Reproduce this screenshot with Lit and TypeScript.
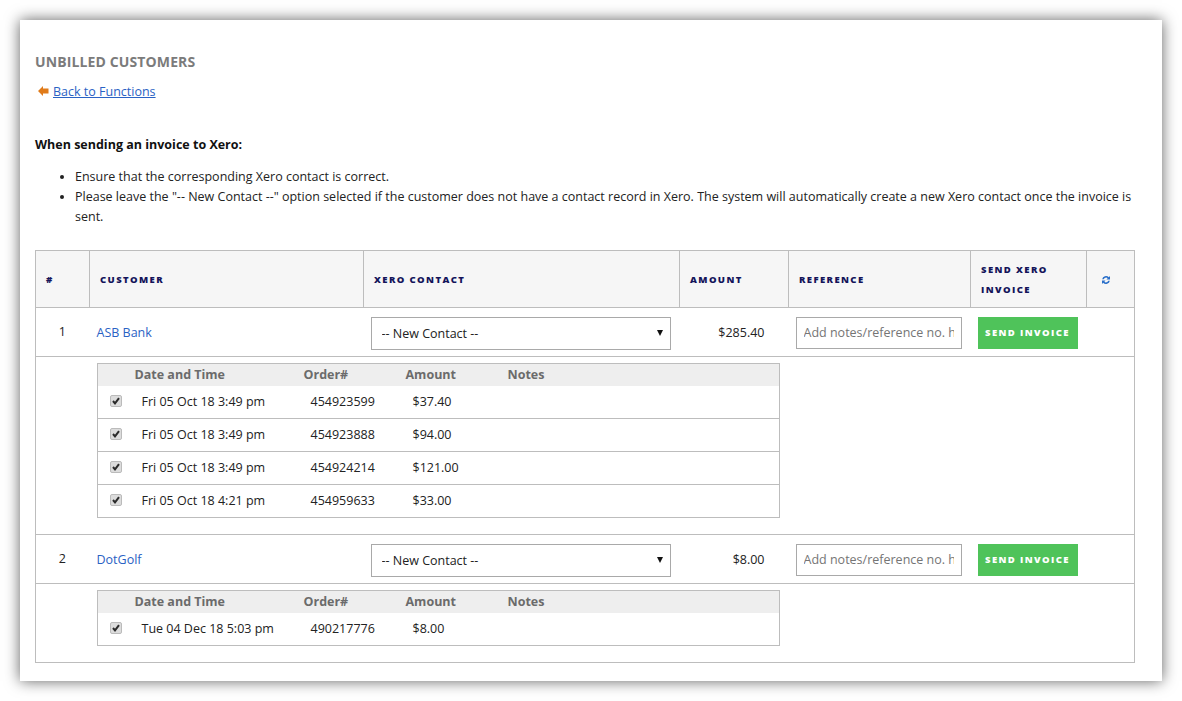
import { LitElement, html, css, svg } from "lit";
import { customElement } from "lit/decorators.js";

interface Order { date: string; no: string; amount: string; }
interface Customer { n: number; name: string; amount: string; orders: Order[]; }

const customers: Customer[] = [
  { n: 1, name: "ASB Bank", amount: "$285.40", orders: [
    { date: "Fri 05 Oct 18 3:49 pm", no: "454923599", amount: "$37.40" },
    { date: "Fri 05 Oct 18 3:49 pm", no: "454923888", amount: "$94.00" },
    { date: "Fri 05 Oct 18 3:49 pm", no: "454924214", amount: "$121.00" },
    { date: "Fri 05 Oct 18 4:21 pm", no: "454959633", amount: "$33.00" },
  ] },
  { n: 2, name: "DotGolf", amount: "$8.00", orders: [
    { date: "Tue 04 Dec 18 5:03 pm", no: "490217776", amount: "$8.00" },
  ] },
];

const refresh = svg`<svg class="refresh" viewBox="0 0 12 12" width="10" height="10"><path d="M1.4 5A4.7 4.7 0 0 1 9.4 2.6L10.8 1.2V5.4H6.6L8 4A2.8 2.8 0 0 0 3.3 5Z" fill="#2a6fc9"/><path d="M10.6 7A4.7 4.7 0 0 1 2.6 9.4L1.2 10.8V6.6H5.4L4 8A2.8 2.8 0 0 0 8.7 7Z" fill="#2a6fc9"/></svg>`;

@customElement("app-root")
export class AppRoot extends LitElement {
  static styles = css`
    :host { display: block; padding: 20px 20px 20px 20px; font-family: "Open Sans", sans-serif; font-size: 12.5px; color: #222; background: #fff; }
    .card { background: #fff; box-shadow: 0 0 14px rgba(0,0,0,.62); height: 661px; box-sizing: border-box; padding: 33px 27px 0 15px; }
    h1 { margin: 0; font-size: 14px; line-height: 18px; font-weight: 700; color: #7b7b7b; letter-spacing: .12px; }
    .back { display: flex; align-items: center; gap: 4px; margin: 11px 0 0 3px; height: 18px; }
    a { color: #2a62c4; }
    .back a { font-size: 12.5px; }
    .intro { margin: 36px 0 0; font-weight: 700; color: #111; line-height: 18px; font-size: 12.5px; }
    ul { margin: 13px 0 0; padding: 0 0 0 40px; line-height: 20px; }
    table.main { margin-top: 23px; width: 1100px; table-layout: fixed; border-collapse: collapse; border: 1px solid #bdbdbd; }
    .main > thead th { background: #f6f6f6; border: 1px solid #bdbdbd; height: 57px; padding: 1px 10px 0; box-sizing: border-box; text-align: left; color: #14145a; font-size: 9.5px; font-weight: 800; letter-spacing: 1.4px; line-height: 20px; }
    .main > tbody > tr.row > td { height: 49px; border-top: 1px solid #bdbdbd; border-bottom: 1px solid #bdbdbd; padding: 0; box-sizing: border-box; }
    .main > tbody > tr.row > td.num { text-align: center; padding: 0 1px 1px 0; }
    .name a { margin-left: 7px; text-decoration: none; }
    .sel { position: relative; width: 300px; margin: 2px 0 0 7px; height: 33px; }
    select { appearance: none; display: block; width: 100%; height: 33px; border: 1px solid #a9a9a9; border-radius: 0; background: #fff; padding: 0 10px; font: 12.5px "Open Sans", sans-serif; color: #222; }
    .arrow { position: absolute; right: 8px; top: 13px; width: 0; height: 0; border-left: 3.5px solid transparent; border-right: 3.5px solid transparent; border-top: 6px solid #111; }
    .amt { text-align: right; padding-right: 24px !important; }
    input { width: 166px; height: 32px; box-sizing: border-box; margin: 2px 0 0 7px; display: block; border: 1px solid #a9a9a9; padding: 0 7px 2px; font: 12.5px "Open Sans", sans-serif; color: #222; }
    input::placeholder { color: #757575; opacity: 1; }
    button { display: block; margin: 2px 0 0 7px; width: 100px; height: 32px; background: #4fc35a; border: 0; color: #fff; font: 800 9.5px "Open Sans", sans-serif; letter-spacing: 1.4px; padding: 0 0 2px; }
    .detail > td { padding: 6px 0 16px 0; border-bottom: 1px solid #bdbdbd; vertical-align: top; }
    .detail:last-child > td { border-bottom: 0; padding-bottom: 16px; }
    table.orders { margin-left: 61px; width: 683px; table-layout: fixed; border-collapse: collapse; border: 1px solid #bdbdbd; }
    .orders th { height: 22px; padding: 0 0 1px; box-sizing: border-box; background: #eee; text-align: left; font-size: 12.5px; font-weight: 700; color: #6b6b6b; }
    .orders td { height: 33px; padding: 0 0 2px; border-top: 1px solid #bdbdbd; box-sizing: border-box; }
    .orders tbody tr:first-child td { border-top: 0; padding-bottom: 1px; }
    .orders td.d { padding-left: 7px; }
    .orders td.o, .orders td.a { padding-left: 7px; }
    .check { display: block; width: 10px; height: 10px; margin-left: 12px; border: 1px solid #bbb; border-radius: 2px; background: #dcdcdc; }
    .check svg { display: block; }
    .refresh { display: block; margin: 1px 0 0 4px; }
  `;

  private order(o: Order) {
    return html`<tr>
      <td><span class="check"><svg viewBox="0 0 10 10" width="10" height="10"><path d="M2 5 4 7.4 8 2.2" fill="none" stroke="#2b2b2b" stroke-width="2"/></svg></span></td>
      <td class="d">${o.date}</td><td class="o">${o.no}</td><td class="a">${o.amount}</td><td></td>
    </tr>`;
  }

  private customer(c: Customer) {
    return html`
      <tr class="row">
        <td class="num">${c.n}</td>
        <td class="name"><a href="#">${c.name}</a></td>
        <td><div class="sel"><select><option>-- New Contact --</option></select><span class="arrow"></span></div></td>
        <td class="amt">${c.amount}</td>
        <td><input placeholder="Add notes/reference no. here" /></td>
        <td><button>SEND INVOICE</button></td>
        <td></td>
      </tr>
      <tr class="detail"><td colspan="7">
        <table class="orders">
          <colgroup><col style="width:37px"/><col style="width:169px"/><col style="width:102px"/><col style="width:102px"/><col/></colgroup>
          <thead><tr><th></th><th>Date and Time</th><th>Order#</th><th>Amount</th><th>Notes</th></tr></thead>
          <tbody>${c.orders.map((o) => this.order(o))}</tbody>
        </table>
      </td></tr>`;
  }

  render() {
    return html`<div class="card">
      <h1>UNBILLED CUSTOMERS</h1>
      <div class="back">
        <svg width="11" height="10" viewBox="0 0 11 10"><path d="M0 5 5 0V2.5H10.5V7.5H5V10Z" fill="#e07b1a"/></svg>
        <a href="#">Back to Functions</a>
      </div>
      <p class="intro">When sending an invoice to Xero:</p>
      <ul>
        <li>Ensure that the corresponding Xero contact is correct.</li>
        <li>Please leave the "-- New Contact --" option selected if the customer does not have a contact record in Xero. The system will automatically create a new Xero contact once the invoice is sent.</li>
      </ul>
      <table class="main">
        <colgroup><col style="width:54px"/><col style="width:274px"/><col style="width:316px"/><col style="width:109px"/><col style="width:182px"/><col style="width:116px"/><col/></colgroup>
        <thead><tr>
          <th>#</th><th>CUSTOMER</th><th>XERO CONTACT</th><th>AMOUNT</th><th>REFERENCE</th><th>SEND XERO INVOICE</th><th>${refresh}</th>
        </tr></thead>
        <tbody>${customers.map((c) => this.customer(c))}</tbody>
      </table>
    </div>`;
  }
}
